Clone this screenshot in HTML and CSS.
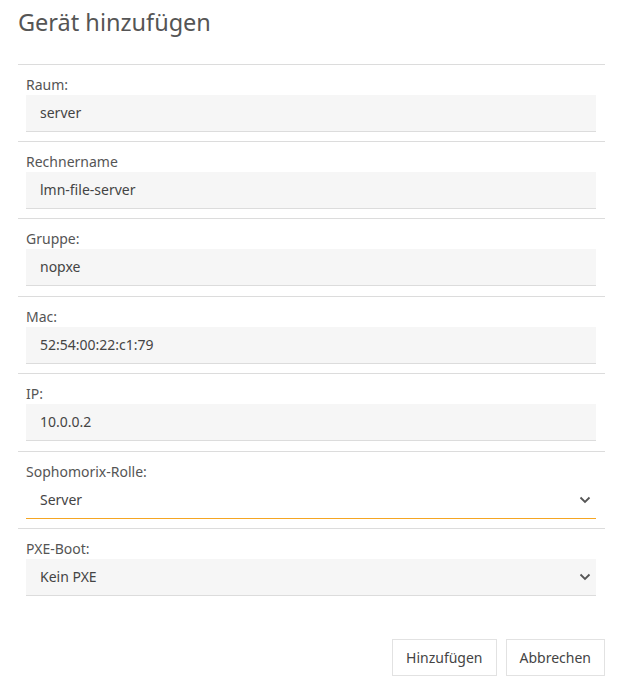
FILE: index.html
```html
<!DOCTYPE html>
<html lang="de">
<head>
<meta charset="utf-8">
<link rel="stylesheet" href="styles.css">
</head>
<body>
<div class="dialog">
  <h1 class="title">Gerät hinzufügen</h1>
  <div class="form">
    <div class="row"><label class="label">Raum:</label><div class="field">server</div></div>
    <div class="row"><label class="label">Rechnername</label><div class="field">lmn-file-server</div></div>
    <div class="row"><label class="label">Gruppe:</label><div class="field">nopxe</div></div>
    <div class="row"><label class="label">Mac:</label><div class="field">52:54:00:22:c1:79</div></div>
    <div class="row"><label class="label">IP:</label><div class="field">10.0.0.2</div></div>
    <div class="row"><label class="label">Sophomorix-Rolle:</label><div class="field select focused"><span>Server</span><svg class="chev" width="12" height="8" viewBox="0 0 12 8"><path d="M1.5 1.5 L6 6 L10.5 1.5" fill="none" stroke="#555" stroke-width="1.8"/></svg></div></div>
    <div class="row last"><label class="label">PXE-Boot:</label><div class="field select"><span>Kein PXE</span><svg class="chev" width="12" height="8" viewBox="0 0 12 8"><path d="M1.5 1.5 L6 6 L10.5 1.5" fill="none" stroke="#555" stroke-width="1.8"/></svg></div></div>
  </div>
  <div class="footer">
    <button class="btn">Hinzufügen</button>
    <button class="btn">Abbrechen</button>
  </div>
</div>
</body>
</html>
```
FILE: styles.css
```css
html, body { margin: 0; padding: 0; background: #fff; }
body { font-family: "Noto Sans", "Open Sans", sans-serif; color: #444; }
.dialog { padding: 0 23px 0 18px; }
.title { margin: 0; height: 64px; padding-top: 5px; box-sizing: border-box; font-size: 23.5px; font-weight: 400; line-height: 34px; color: #555; }
.form { border-top: 1px solid #dcdcdc; }
.row { padding: 10px 9px 9px 8px; border-bottom: 1px solid #dcdcdc; }
.row:nth-child(3), .row:nth-child(5), .row.last { padding-bottom: 10px; }
.row.last { border-bottom: none; }
.label { display: block; font-size: 14px; line-height: 20px; color: #555; }
.field { height: 37px; box-sizing: border-box; background: #f6f6f6; border-bottom: 1px solid #dcdcdc; padding: 0 14px; font-size: 14px; line-height: 36px; color: #444; display: flex; align-items: center; justify-content: space-between; }
.field.focused { background: #fff; border-bottom-color: #f5a623; }
.chev { margin-right: -9px; }
.footer { display: flex; justify-content: flex-end; gap: 9px; padding-top: 33px; }
.btn { font-family: inherit; font-size: 14px; color: #444; background: #fff; border: 1px solid #e2e2e2; height: 37px; padding: 0 13px; }
```
